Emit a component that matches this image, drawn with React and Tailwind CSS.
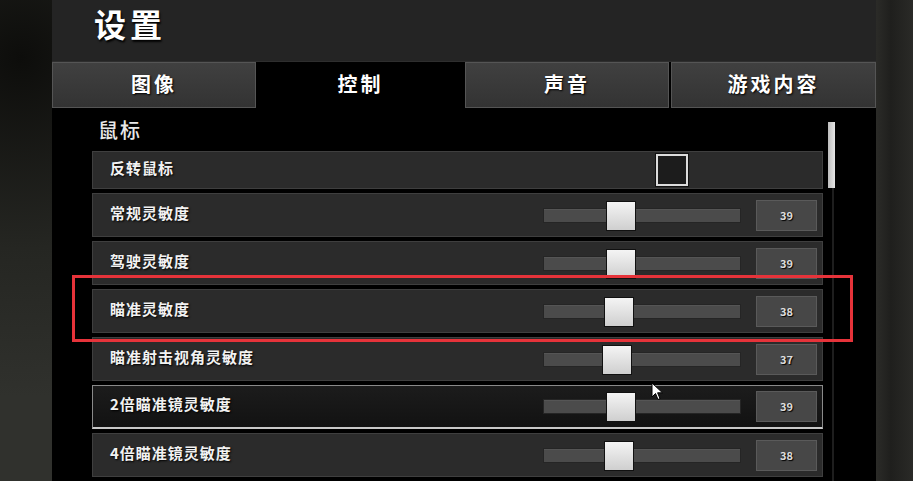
import React from "react";

const FONT = { fontFamily: '"Noto Sans CJK SC", "Noto Sans", sans-serif' };

const rows = [
  { label: "常规灵敏度", value: 39 },
  { label: "驾驶灵敏度", value: 39 },
  { label: "瞄准灵敏度", value: 38 },
  { label: "瞄准射击视角灵敏度", value: 37 },
  { label: "2倍瞄准镜灵敏度", value: 39, selected: true },
  { label: "4倍瞄准镜灵敏度", value: 38 },
];

function Slider({ value }) {
  return (
    <div className="relative w-[198px] h-[15px] bg-[#4b4b4b] border border-[#252525] shadow-[inset_0_1px_0_#555]">
      <div
        className="absolute top-[-8px] w-[30px] h-[30px] border border-[#111] bg-[linear-gradient(to_bottom,#f4f4f4,#cfcfcf)]"
        style={{ left: value * 2 - 16 }}
      />
    </div>
  );
}

function Row({ label, value, selected }) {
  return (
    <div
      className={
        "flex items-center h-[44px] border " +
        (selected
          ? "bg-[linear-gradient(to_bottom,#1c1c1c,#121212)] border-[#8a8a8a] border-b-[#c8c8c8] border-b-2"
          : "bg-[#2b2b2b] border-[#3f3f3f]")
      }
    >
      <div className="flex-1 pl-[17px] pb-[4px] text-[15px] font-bold tracking-[1px] text-[#f2f2f2] [text-shadow:1px_1px_2px_#000]">
        {label}
      </div>
      <Slider value={value} />
      <div className="ml-[15px] mr-[5px] w-[61px] h-[31px] flex items-center justify-center bg-[#474747] border border-[#5a5a5a] text-[11px] font-bold text-[#dcdcdc] [text-shadow:1px_1px_1px_#000]">
        {value}
      </div>
    </div>
  );
}

const tabCls =
  "flex items-center justify-center pb-[3px] text-[20px] font-bold text-white tracking-[3px] [text-shadow:1px_1px_2px_#000]";
const tabInactive = " bg-[linear-gradient(to_bottom,#404040,#333333)] border border-[#555]";

export default function App() {
  return (
    <div className="relative w-[913px] h-[481px] flex overflow-hidden bg-black" style={FONT}>
      <div className="w-[52px] h-full bg-[radial-gradient(circle_at_40%_12%,#0d0d0b_0,#252622_45%,#30312d_80%)]" />
      <div className="w-[824px] h-full flex flex-col">
        <div className="h-[62px] bg-[#242424] border-b border-[#2e2e2e] flex items-start pl-[42px]">
          <span className="text-[32px] leading-[47px] font-bold text-white tracking-[4px] [text-shadow:1px_2px_2px_#000]">设置</span>
        </div>
        <div className="h-[46px] flex bg-black">
          <div className={"w-[204px]" + " " + tabCls + tabInactive}>图像</div>
          <div className={"w-[209px] bg-black " + tabCls}>控制</div>
          <div className={"w-[204px] " + tabCls + tabInactive}>声音</div>
          <div className={"ml-[2px] w-[205px] " + tabCls + tabInactive}>游戏内容</div>
        </div>
        <div className="flex-1 flex bg-black">
          <div className="ml-[40px] w-[731px] flex flex-col pt-[6px]">
            <div className="h-[36px] flex items-center pl-[6px] pb-[4px] text-[20px] font-medium text-[#e8e8e8] tracking-[2px]">鼠标</div>
            <div className="mt-[1px] flex flex-col gap-[4px]">
              <div className="flex items-center h-[38px] bg-[#2b2b2b] border border-[#3f3f3f]">
                <div className="flex-1 pl-[17px] pb-[4px] text-[15px] font-bold tracking-[1px] text-[#f2f2f2] [text-shadow:1px_1px_2px_#000]">反转鼠标</div>
                <div className="w-[32px] h-[32px] border-2 border-[#dcdcdc] bg-[#1c1c1c] shadow-[0_0_0_1px_#111]" />
                <div className="w-[134px]" />
              </div>
              {rows.map((r) => (
                <Row key={r.label} {...r} />
              ))}
            </div>
          </div>
          <div className="ml-[5px] w-[7px] flex flex-col items-center pt-[14px]">
            <div className="w-[7px] h-[66px] bg-[linear-gradient(to_right,#bdbdbd,#e6e6e6)]" />
            <div className="flex-1 w-[2px] ml-[3px] bg-[#1e1e1e]" />
          </div>
        </div>
      </div>
      <div className="flex-1 h-full bg-[linear-gradient(to_right,#2b2b28,#1f1f1d_40%,#2a2a27)]" />

      <div className="absolute left-[72px] top-[275px] w-[781px] h-[67px] border-[3px] border-[#e6333a] pointer-events-none" />

      <svg className="absolute left-[651px] top-[382px]" width="14" height="20" viewBox="0 0 14 20">
        <path d="M1 1 L1 15 L4.5 11.5 L7 17.5 L9 16.6 L6.6 10.8 L11.5 10.8 Z" fill="#fff" stroke="#000" strokeWidth="1" />
      </svg>
    </div>
  );
}
